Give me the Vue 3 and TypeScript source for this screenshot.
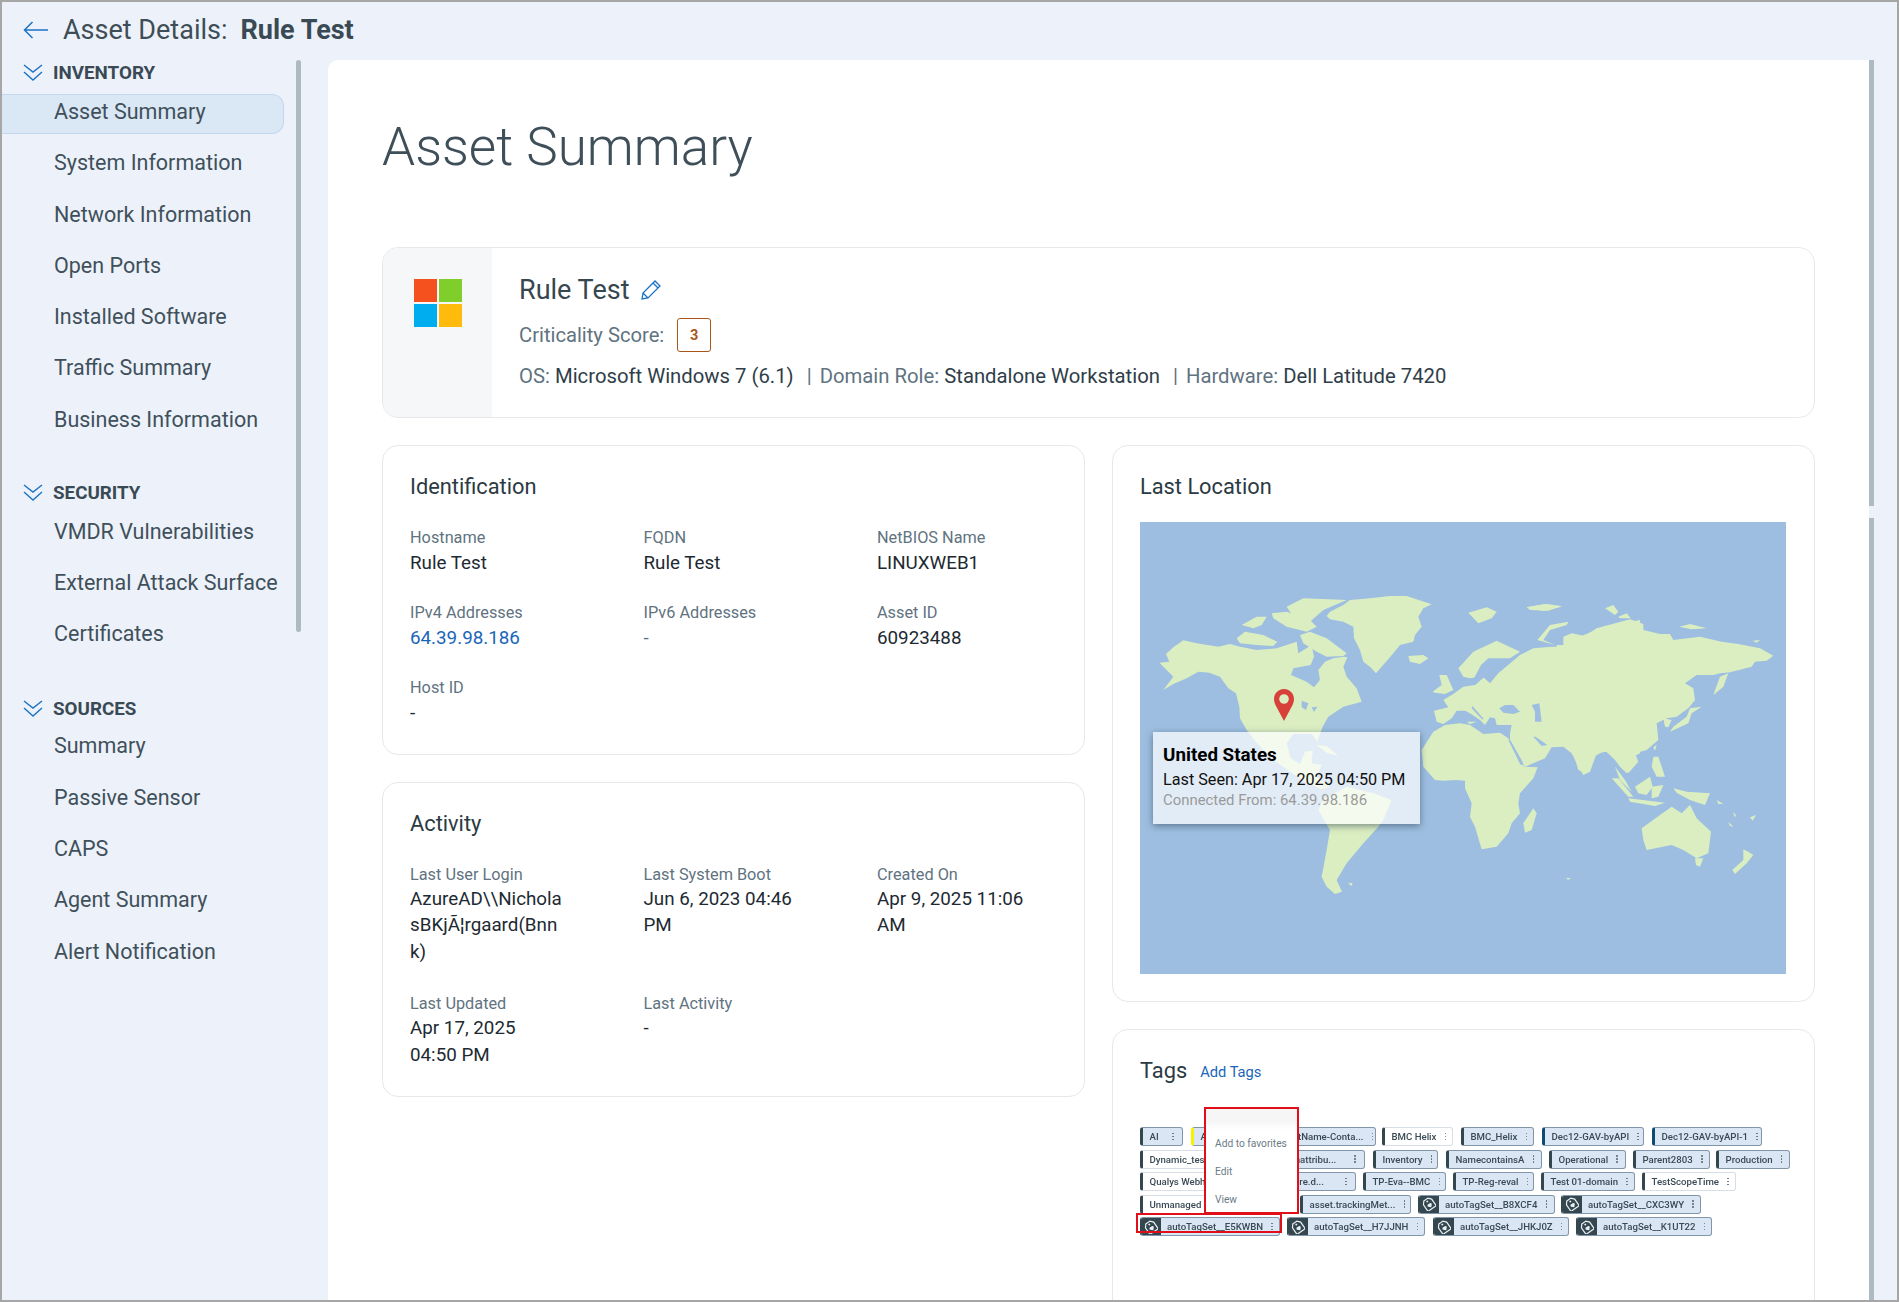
<script setup lang="ts">
interface Group { title: string; items: string[] }
interface Field { label: string; value: string; link?: boolean }
interface Chip { from: number; to: number; label: string; kind?: 'white' | 'yellow' | 'navy' | 'icon' }

const groups: Group[] = [
  { title: 'INVENTORY', items: ['Asset Summary', 'System Information', 'Network Information', 'Open Ports', 'Installed Software', 'Traffic Summary', 'Business Information'] },
  { title: 'SECURITY', items: ['VMDR Vulnerabilities', 'External Attack Surface', 'Certificates'] },
  { title: 'SOURCES', items: ['Summary', 'Passive Sensor', 'CAPS', 'Agent Summary', 'Alert Notification'] }
]

const identification: Field[] = [
  { label: 'Hostname', value: 'Rule Test' },
  { label: 'FQDN', value: 'Rule Test' },
  { label: 'NetBIOS Name', value: 'LINUXWEB1' },
  { label: 'IPv4 Addresses', value: '64.39.98.186', link: true },
  { label: 'IPv6 Addresses', value: '-' },
  { label: 'Asset ID', value: '60923488' },
  { label: 'Host ID', value: '-' }
]

const activity: Field[] = [
  { label: 'Last User Login', value: 'AzureAD\\\\NicholasBKjÃ¦rgaard(Bnnk)' },
  { label: 'Last System Boot', value: 'Jun 6, 2023 04:46 PM' },
  { label: 'Created On', value: 'Apr 9, 2025 11:06 AM' },
  { label: 'Last Updated', value: 'Apr 17, 2025 04:50 PM' },
  { label: 'Last Activity', value: '-' }
]

const tagRows: Chip[][] = [
  [
    { from: 1141, to: 1184, label: 'AI' },
    { from: 1192, to: 1260, label: 'Asset', kind: 'yellow' },
    { from: 1268, to: 1377, label: 'AssetName-Conta...' },
    { from: 1383, to: 1454, label: 'BMC Helix', kind: 'white' },
    { from: 1462, to: 1535, label: 'BMC_Helix' },
    { from: 1543, to: 1645, label: 'Dec12-GAV-byAPI', kind: 'navy' },
    { from: 1653, to: 1763, label: 'Dec12-GAV-byAPI-1', kind: 'navy' }
  ],
  [
    { from: 1141, to: 1250, label: 'Dynamic_test', kind: 'white' },
    { from: 1258, to: 1366, label: 'Customattribu...' },
    { from: 1374, to: 1439, label: 'Inventory' },
    { from: 1447, to: 1543, label: 'NamecontainsA' },
    { from: 1550, to: 1627, label: 'Operational' },
    { from: 1634, to: 1711, label: 'Parent2803' },
    { from: 1717, to: 1791, label: 'Production' }
  ],
  [
    { from: 1141, to: 1228, label: 'Qualys Webh', kind: 'white' },
    { from: 1236, to: 1357, label: 'AssetSoftware.d...' },
    { from: 1364, to: 1447, label: 'TP-Eva--BMC' },
    { from: 1454, to: 1535, label: 'TP-Reg-reval' },
    { from: 1542, to: 1636, label: 'Test 01-domain' },
    { from: 1643, to: 1737, label: 'TestScopeTime', kind: 'white' }
  ],
  [
    { from: 1141, to: 1294, label: 'Unmanaged', kind: 'white' },
    { from: 1301, to: 1412, label: 'asset.trackingMet...' },
    { from: 1419, to: 1556, label: 'autoTagSet__B8XCF4', kind: 'icon' },
    { from: 1562, to: 1702, label: 'autoTagSet__CXC3WY', kind: 'icon' }
  ],
  [
    { from: 1141, to: 1281, label: 'autoTagSet__E5KWBN', kind: 'icon' },
    { from: 1288, to: 1426, label: 'autoTagSet__H7JJNH', kind: 'icon' },
    { from: 1434, to: 1570, label: 'autoTagSet__JHKJ0Z', kind: 'icon' },
    { from: 1577, to: 1713, label: 'autoTagSet__K1UT22', kind: 'icon' }
  ]
]

function chipStyle(row: Chip[], i: number) {
  const c = row[i]
  const prev = i === 0 ? 1141 : row[i - 1].to
  return { width: `${c.to - c.from}px`, marginLeft: `${c.from - prev}px` }
}

const usaLand: string[] = [
  'M88 458 L118 455 L108 432 L130 412 L160 391 L200 400 L265 410 L300 402 L330 410 L380 420 L440 415 L500 395 L505 430 L545 405 L552 440 L542 465 L490 475 L483 495 L530 515 L552 532 L570 510 L565 480 L585 455 L610 445 L640 440 L652 442 L640 470 L650 500 L680 535 L695 575 L640 590 L595 620 L578 650 L562 695 L545 672 L490 672 L470 700 L482 745 L510 762 L525 725 L548 722 L545 760 L575 765 L560 800 L600 830 L575 838 L520 812 L470 778 L420 742 L375 692 L350 660 L330 625 L328 590 L318 550 L295 535 L270 500 L238 488 L205 485 L170 505 L130 522 L100 540 L130 500 L108 478 Z',
  'M320 385 L345 365 L400 375 L442 395 L430 408 L380 405 L330 400 Z',
  'M335 345 L380 320 L410 320 L395 345 L370 355 Z',
  'M425 310 L470 305 L540 330 L560 350 L530 365 L470 350 L430 325 Z',
  'M470 290 L520 265 L650 270 L580 300 L540 335 L490 320 Z',
  'M510 375 L540 365 L590 385 L650 430 L640 438 L590 440 L560 425 L520 400 Z',
  'M590 318 L600 305 L640 285 L660 270 L720 265 L780 258 L830 258 L905 283 L880 295 L865 320 L875 350 L855 375 L850 395 L810 405 L790 430 L755 470 L738 490 L720 470 L700 455 L690 420 L672 385 L670 350 L640 335 L600 328 Z',
  'M835 438 L880 435 L895 445 L870 462 L840 455 Z',
  'M565 900 L580 868 L650 830 L730 850 L785 870 L760 930 L745 950 L700 1000 L650 1060 L620 1110 L636 1145 L615 1152 L590 1130 L575 1100 L590 1020 L600 960 Z',
  'M560 705 L590 708 L625 738 L590 728 Z',
  'M655 1120 L668 1118 L664 1128 Z'
]

const usaWater: string[] = [
  'M515 572 L535 580 L528 600 L515 592 Z',
  'M545 592 L562 590 L552 606 Z'
]

const centerLand: string[] = [
  'M5 480 L40 425 L75 405 L120 400 L150 405 L190 432 L240 428 L265 445 L300 520 L315 530 L353 532 L340 565 L300 610 L295 640 L300 670 L275 700 L265 730 L230 770 L185 778 L165 710 L150 680 L155 640 L135 595 L135 572 L110 570 L70 572 L45 570 L10 530 Z',
  'M340 655 L350 670 L335 720 L315 728 L310 700 Z',
  'M42 362 L85 352 L70 330 L100 312 L130 290 L165 285 L190 262 L210 280 L235 250 L300 195 L340 175 L395 170 L430 170 L480 140 L550 110 L660 90 L660 490 L640 500 L620 550 L600 530 L585 510 L560 485 L530 490 L510 545 L490 555 L470 520 L455 490 L430 470 L395 472 L375 505 L315 530 L300 510 L270 455 L270 430 L275 405 L230 405 L225 385 L210 382 L195 405 L180 390 L150 370 L135 362 L110 362 L95 385 L70 402 L50 395 Z',
  'M115 235 L160 185 L230 152 L300 185 L270 205 L215 205 L185 225 L180 260 L150 265 L130 260 Z',
  'M38 305 L65 285 L58 255 L80 255 L100 300 L75 312 L45 308 Z',
  'M145 68 L200 52 L230 65 L215 85 L175 100 Z',
  'M320 52 L380 42 L425 48 L385 62 L330 60 Z',
  'M140 395 L170 395 L150 402 Z'
]

const centerWater: string[] = [
  'M265 450 L272 452 L310 520 L302 525 Z',
  'M340 440 L347 440 L382 465 L365 468 Z',
  'M238 355 L255 345 L280 345 L300 365 L280 372 L250 368 Z',
  'M335 345 L358 340 L365 395 L345 395 L345 365 Z',
  'M205 205 L215 205 L190 245 L235 248 L192 262 L165 285 L155 278 L183 225 Z',
  'M157 348 L192 388 L186 388 L155 355 Z'
]

const eastLand: string[] = [
  'M170 405 L190 405 L190 380 L215 370 L255 378 L290 355 L345 340 L390 328 L430 342 L430 360 L480 372 L510 372 L520 390 L600 380 L665 395 L715 402 L780 415 L820 437 L800 452 L765 455 L755 470 L690 487 L660 490 L640 495 L590 495 L555 520 L580 535 L585 570 L565 595 L530 620 L500 625 L470 640 L475 690 L440 720 L405 730 L415 755 L385 790 L350 750 L325 730 L315 722 L290 735 L265 765 L255 790 L235 780 L220 730 L190 705 L170 705 Z',
  'M640 555 L660 500 L685 490 L670 530 Z',
  'M510 665 L565 640 L575 610 L605 590 L570 595 L560 620 L520 650 Z',
  'M490 625 L515 630 L505 652 L495 650 Z',
  'M460 740 L475 740 L495 800 L470 800 L455 770 Z',
  'M460 712 L470 705 L465 722 Z',
  'M335 805 L355 805 L400 860 L385 860 Z',
  'M385 865 L495 878 L465 888 L390 875 Z',
  'M405 830 L450 800 L458 830 L440 855 L415 850 Z',
  'M455 830 L490 825 L475 860 L455 865 Z',
  'M520 835 L560 845 L630 850 L615 885 L570 870 L530 848 Z',
  'M345 770 L375 810 L395 845 L360 810 Z',
  'M425 955 L480 915 L515 890 L545 910 L570 885 L590 925 L633 965 L625 1030 L590 1045 L550 1020 L515 1005 L440 1020 L430 990 Z',
  'M585 1045 L610 1045 L600 1070 L588 1065 Z',
  'M730 1018 L745 1025 L760 1035 L740 1060 L705 1092 L697 1080 L730 1050 Z',
  'M698 907 L708 915 L705 922 Z',
  'M750 922 L768 915 L758 932 Z',
  'M650 870 L670 882 L655 882 Z',
  'M685 935 L700 950 L690 948 Z',
  'M112 390 L150 345 L205 335 L200 345 L150 360 L130 390 L165 405 Z',
  'M315 295 L340 285 L355 305 L345 315 Z',
  'M355 320 L380 310 L392 325 L360 325 Z',
  'M538 350 L570 342 L620 355 L575 358 Z',
  'M758 392 L780 390 L770 398 Z',
  'M80 292 L130 283 L185 290 L130 303 Z',
  'M198 1103 L212 1105 L204 1110 Z'
]
</script>

<template>
  <div class="frame">
    <header class="topbar">
      <svg class="back" viewBox="0 0 26 18" fill="none" stroke="#1b72c4" stroke-width="1.5">
        <path d="M25 9H1.5M9.5 1 1.5 9l8 8" />
      </svg>
      <span class="crumb">Asset Details:</span>
      <strong class="crumb-name">Rule Test</strong>
    </header>

    <div class="body">
      <nav class="sidebar">
        <section v-for="g in groups" :key="g.title" class="group">
          <div class="group-head">
            <svg class="chev" viewBox="0 0 20 17" fill="none" stroke="#1b72c4" stroke-width="1.4">
              <path d="M1 1l9 7 9-7M1 8l9 8 9-8" />
            </svg>
            <span>{{ g.title }}</span>
          </div>
          <a v-for="item in g.items" :key="item" class="nav-item" :class="{ active: item === 'Asset Summary' }">{{ item }}</a>
        </section>
        <div class="side-scroll"></div>
      </nav>

      <main class="main">
        <h1>Asset Summary</h1>

        <section class="hero">
          <div class="hero-logo">
            <div class="win">
              <i class="w1"></i><i class="w2"></i><i class="w3"></i><i class="w4"></i>
            </div>
          </div>
          <div class="hero-info">
            <div class="hero-name">
              <span>Rule Test</span>
              <svg class="pencil" viewBox="0 0 22 22" fill="none" stroke="#1b72c4" stroke-width="1.3">
                <path d="M2 20l1-6L15 2l5 5L8 19l-6 1ZM3 14l5 5M13 4l5 5" />
              </svg>
            </div>
            <div class="hero-score">
              <span class="muted">Criticality Score:</span>
              <b class="score">3</b>
            </div>
            <div class="hero-meta">
              <span class="muted">OS:</span> Microsoft Windows 7 (6.1)
              <span class="muted sep">|</span>
              <span class="muted">Domain Role:</span> Standalone Workstation
              <span class="muted sep">|</span>
              <span class="muted">Hardware:</span> Dell Latitude 7420
            </div>
          </div>
        </section>

        <div class="columns">
          <div class="col">
            <section class="card">
              <h2>Identification</h2>
              <div class="fields">
                <div v-for="f in identification" :key="f.label">
                  <div class="f-label">{{ f.label }}</div>
                  <div class="f-value" :class="{ link: f.link, dim: f.label === 'IPv6 Addresses' }">{{ f.value }}</div>
                </div>
              </div>
            </section>
            <section class="card activity">
              <h2>Activity</h2>
              <div class="fields">
                <div v-for="f in activity" :key="f.label">
                  <div class="f-label">{{ f.label }}</div>
                  <div class="f-value">{{ f.value }}</div>
                </div>
              </div>
            </section>
          </div>

          <div class="col">
            <section class="card location">
              <h2 class="map-title">Last Location</h2>
              <div class="map">
                <svg class="world" viewBox="1140 522 646 452" preserveAspectRatio="none">
                  <rect x="1140" y="522" width="646" height="452" fill="#9dbee0" />
                  <g transform="translate(1130 510) scale(.33333)" fill="#dbeec2">
                    <path v-for="d in usaLand" :key="d" :d="d" />
                  </g>
                  <g transform="translate(1130 510) scale(.33333)" fill="#9dbee0">
                    <path v-for="d in usaWater" :key="d" :d="d" />
                  </g>
                  <g transform="translate(1420 590) scale(.33333)">
                    <path v-for="d in centerLand" :key="d" :d="d" fill="#dbeec2" />
                  </g>
                  <g transform="translate(1500 510) scale(.33333)" fill="#dbeec2">
                    <path v-for="d in eastLand" :key="d" :d="d" />
                  </g>
                  <g transform="translate(1420 590) scale(.33333)" fill="#9dbee0">
                    <path v-for="d in centerWater" :key="d" :d="d" />
                  </g>
                </svg>
                <svg class="pin" viewBox="0 0 20 32">
                  <path fill="#d8413a" fill-rule="evenodd" d="M10 0C4.5 0 0 4.4 0 10c0 3 1 5 2.500 8L10 32l7.500-14c1.500-3 2.500-5 2.500-8C20 4.400 15.500 0 10 0Zm0 5.200a4.800 4.800 0 1 1 0 9.600 4.800 4.800 0 0 1 0-9.600Z" />
                </svg>
                <div class="tip">
                  <div class="tip-title">United States</div>
                  <div class="tip-seen">Last Seen: Apr 17, 2025 04:50 PM</div>
                  <div class="tip-from">Connected From: 64.39.98.186</div>
                </div>
              </div>
            </section>

            <section class="card tags-card">
              <div class="tags-head">
                <h2>Tags</h2>
                <a class="add">Add Tags</a>
              </div>
              <div class="tags">
                <div v-for="(row, r) in tagRows" :key="r" class="tag-row">
                  <div
                    v-for="(c, i) in row"
                    :key="c.label"
                    class="chip"
                    :class="c.kind"
                    :style="chipStyle(row, i)"
                  >
                    <span v-if="c.kind === 'icon'" class="chip-icon">
                      <svg viewBox="0 0 14 14">
                        <g transform="rotate(-35 7 7)">
                          <path fill="none" stroke="#e8eef3" stroke-width="1.2" d="M4.500 1.500h5L12 4.500v7a1 1 0 0 1-1 1H3a1 1 0 0 1-1-1v-7Z" />
                          <circle cx="7" cy="4" r="1" fill="#e8eef3" />
                          <path fill="#e8eef3" d="M7 11 4.700 8.600a1.400 1.400 0 0 1 2.300-1.500 1.400 1.400 0 0 1 2.300 1.500Z" />
                        </g>
                      </svg>
                    </span>
                    <span class="chip-text">{{ c.label }}</span>
                    <span class="dots"><i></i><i></i><i></i></span>
                  </div>
                </div>
                <div class="menu">
                  <div class="menu-top"></div>
                  <div class="menu-item">Add to favorites</div>
                  <div class="menu-item">Edit</div>
                  <div class="menu-item">View</div>
                </div>
                <div class="mark"></div>
              </div>
            </section>
          </div>
        </div>
      </main>

      <div class="rail">
        <i class="rail-a"></i>
        <i class="rail-b"></i>
      </div>
    </div>
  </div>
</template>

<style>
html, body { margin: 0; padding: 0; background: #edf2fa; }
</style>

<style scoped>
.frame {
  box-sizing: border-box;
  width: 1899px;
  height: 1302px;
  border: 2px solid #a6a6a6;
  background: #edf2fa;
  overflow: hidden;
  font-family: Roboto, "Liberation Sans", sans-serif;
  color: #3a4a54;
  display: flex;
  flex-direction: column;
}
.topbar {
  height: 58px;
  flex: none;
  display: flex;
  align-items: center;
  padding: 0 0 2px 21px;
  box-sizing: border-box;
}
.back { width: 26px; height: 18px; margin-right: 14px; }
.crumb { font-size: 27px; color: #3e4e58; }
.crumb-name { font-size: 27px; font-weight: 700; color: #3a4a54; margin-left: 13px; }

.body { flex: 1; display: flex; min-height: 0; }

.sidebar { position: relative; width: 326px; flex: none; }
.group { margin-bottom: 39px; }
.group-head {
  height: 34px;
  padding-bottom: 9px;
  box-sizing: border-box;
  padding-left: 21px;
  display: flex;
  align-items: center;
  font-size: 18.800px;
  font-weight: 700;
  color: #3a4a54;
}
.group + .group .group-head { height: 33px; }
.group:last-of-type .group-head { padding-top: 3px; }
.chev { width: 20px; height: 17px; margin-right: 10px; }
.nav-item {
  display: block;
  box-sizing: border-box;
  height: 40px;
  margin-bottom: 11.300px;
  padding-left: 52px;
  line-height: 36px;
  font-size: 21.500px;
  color: #3f505b;
  width: 282px;
  white-space: nowrap;
}
.nav-item.active {
  background: #dae7f4;
  border: 1px solid #c3d7ed;
  border-left: 0;
  border-radius: 0 12px 12px 0;
  line-height: 34px;
}
.side-scroll {
  position: absolute;
  left: 294px;
  top: 0;
  width: 5px;
  height: 572px;
  border-radius: 3px;
  background: #adbac4;
}

.main {
  width: 1541px;
  flex: none;
  background: #fff;
  border-top-left-radius: 10px;
  padding: 48px 54px 0;
  box-sizing: border-box;
  overflow: hidden;
}
h1 {
  margin: 0 0 61px;
  font-size: 53px;
  line-height: 78px;
  font-weight: 300;
  color: #3f4f59;
}
.hero {
  height: 171px;
  box-sizing: border-box;
  border: 1px solid #e6e8eb;
  border-radius: 16px;
  display: flex;
  overflow: hidden;
}
.hero-logo { width: 109px; flex: none; background: #f6f7f9; padding: 31px 0 0 31px; box-sizing: border-box; }
.win { display: grid; grid-template-columns: 23px 23px; grid-template-rows: 23px 23px; gap: 2px; }
.win i { display: block; }
.w1 { background: #f4511e; }
.w2 { background: #7fce2b; }
.w3 { background: #00adef; }
.w4 { background: #ffbb0b; }
.hero-info { padding: 28px 0 0 27px; }
.hero-name { display: flex; align-items: center; height: 28px; font-size: 27px; color: #37474f; }
.pencil { width: 22px; height: 22px; margin-left: 11px; }
.hero-score { display: flex; align-items: center; height: 34px; margin-top: 14px; font-size: 20.200px; }
.muted { color: #5f7380; }
.score {
  box-sizing: border-box;
  width: 34px;
  height: 34px;
  margin-left: 13px;
  border: 1.500px solid #a8561c;
  border-radius: 3px;
  color: #a8561c;
  font-size: 14.500px;
  display: flex;
  align-items: center;
  justify-content: center;
}
.hero-meta { margin-top: 11px; font-size: 20.300px; line-height: 26px; color: #2f3e48; white-space: nowrap; }
.sep { margin: 0 8px; }

.columns { display: grid; grid-template-columns: 703px 703px; column-gap: 27px; margin-top: 27px; }
.col { display: flex; flex-direction: column; gap: 27px; min-width: 0; }
.card {
  box-sizing: border-box;
  border: 1px solid #e6e8eb;
  border-radius: 16px;
  padding: 27px 27px 27px;
  background: #fff;
}
h2 {
  margin: 0 0 27px;
  font-size: 21.800px;
  line-height: 28px;
  font-weight: 400;
  color: #2b3a42;
}
.fields { display: grid; grid-template-columns: repeat(3, 233.500px); row-gap: 26.500px; }
.f-label { font-size: 16.300px; line-height: 20px; color: #5f7380; }
.f-value {
  margin-top: 2px;
  font-size: 18.800px;
  line-height: 26.600px;
  color: #1d2a32;
  width: 154px;
  overflow-wrap: anywhere;
}
.activity .f-value { margin-top: 1px; }
.activity .fields { row-gap: 28.500px; }
.activity { padding-bottom: 27.500px; }
.f-value.link { color: #1a66b8; }
.f-value.dim { color: #5f7380; }

.map-title { margin-bottom: 21px; }
.map { position: relative; width: 646px; height: 452px; }
.world { display: block; width: 646px; height: 452px; }
.pin { position: absolute; left: 134px; top: 167px; width: 20px; height: 32px; }
.tip {
  position: absolute;
  left: 13px;
  top: 210px;
  width: 267px;
  height: 92px;
  box-sizing: border-box;
  padding: 12px 10px;
  background: rgba(255, 255, 255, 0.7);
  box-shadow: 0 2px 7px rgba(40, 60, 80, 0.55);
}
.tip-title { font-size: 18.800px; line-height: 23px; font-weight: 700; color: #000; }
.tip-seen { font-size: 16.200px; line-height: 21px; color: #111; margin-top: 2px; }
.tip-from { font-size: 14.900px; line-height: 21px; color: #9a9a9a; }

.tags-card { height: 300px; flex: none; }
.tags-head { display: flex; align-items: center; height: 28px; }
.tags-head h2 { margin: 0; }
.add { margin-left: 13px; margin-top: 2px; font-size: 14.700px; color: #1a66b8; }
.tags { position: relative; margin-top: 42px; filter: blur(0.3px); }
.tag-row { display: flex; height: 19px; margin-bottom: 3.500px; }
.chip {
  box-sizing: border-box;
  flex: none;
  height: 19px;
  display: flex;
  align-items: center;
  background: #dae6f3;
  border: 1px solid #8196a8;
  border-left: 3px solid #34474f;
  border-radius: 3px;
  padding-left: 6.500px;
  font-size: 9.650px;
  font-weight: 500;
  color: #3a4a54;
  overflow: hidden;
}
.chip.white { background: #fff; border-color: #d7dee5; border-left-color: #34474f; }
.chip.yellow { border-left-color: #f7f300; }
.chip.navy { border-left-color: #0f4a74; }
.chip.icon { border-left-width: 1px; padding-left: 0; }
.chip-icon {
  width: 20px;
  height: 19px;
  flex: none;
  background: #34474f;
  display: flex;
  align-items: center;
  justify-content: center;
  margin-right: 6px;
}
.chip-icon svg { width: 14px; height: 14px; }
.chip-text { flex: 1; white-space: nowrap; }
.dots { flex: none; width: 18px; display: flex; flex-direction: column; align-items: center; gap: 1.500px; }
.dots i { width: 1.600px; height: 1.600px; background: #5d6e7a; border-radius: 50%; }
.menu {
  position: absolute;
  left: 64px;
  top: -20px;
  width: 95px;
  height: 107px;
  box-sizing: border-box;
  background: #fff;
  border: 2px solid #e00f1a;
  font-size: 10.200px;
  color: #6b7b86;
}
.menu-top { height: 21px; background: linear-gradient(#f6f6f6 60%, #fff); }
.menu-item { height: 28px; line-height: 28px; padding-left: 9px; }
.mark {
  position: absolute;
  left: -4px;
  top: 86px;
  width: 146px;
  height: 20px;
  box-sizing: border-box;
  border: 2px solid #e00f1a;
}

.rail { width: 5px; flex: none; position: relative; }
.rail i { position: absolute; left: 0; width: 5px; background: #adbac4; display: block; }
.rail-a { top: 0; height: 446px; }
.rail-b { top: 458px; bottom: 0; }
</style>
